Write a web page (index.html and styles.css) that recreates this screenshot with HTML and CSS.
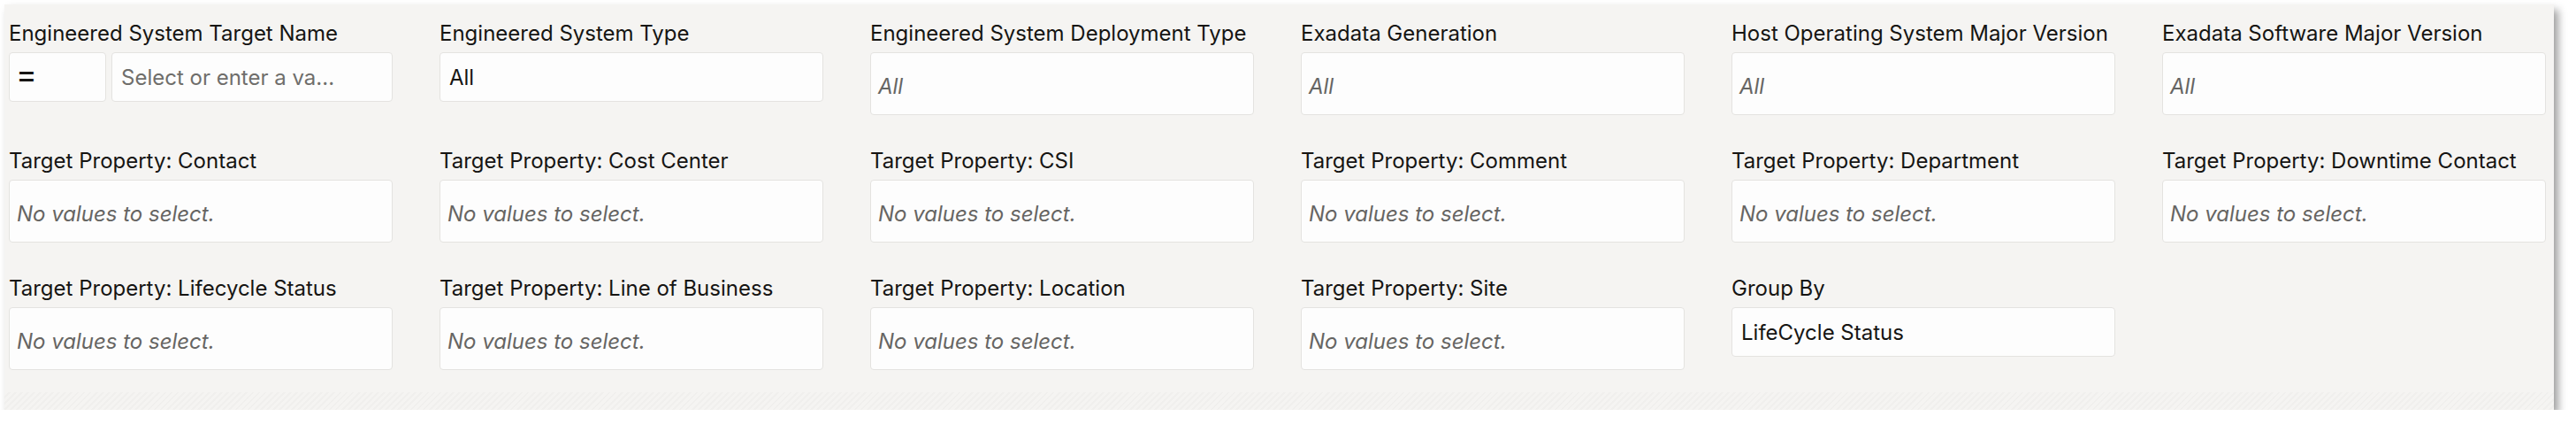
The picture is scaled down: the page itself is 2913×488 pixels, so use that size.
FILE: index.html
```html
<!DOCTYPE html>
<html lang="en">
<head>
<meta charset="utf-8">
<title>Filters</title>
<link rel="stylesheet" href="styles.css">
</head>
<body>
<div class="panel">
  <div class="grid">
    <div class="field">
      <div class="label">Engineered System Target Name</div>
      <div class="split">
        <div class="box short op">=</div>
        <div class="box short ph">Select or enter a va...</div>
      </div>
    </div>
    <div class="field">
      <div class="label">Engineered System Type</div>
      <div class="box short val">All</div>
    </div>
    <div class="field">
      <div class="label">Engineered System Deployment Type</div>
      <div class="box tall it">All</div>
    </div>
    <div class="field">
      <div class="label">Exadata Generation</div>
      <div class="box tall it">All</div>
    </div>
    <div class="field">
      <div class="label">Host Operating System Major Version</div>
      <div class="box tall it">All</div>
    </div>
    <div class="field">
      <div class="label">Exadata Software Major Version</div>
      <div class="box tall it">All</div>
    </div>

    <div class="field">
      <div class="label">Target Property: Contact</div>
      <div class="box tall it">No values to select.</div>
    </div>
    <div class="field">
      <div class="label">Target Property: Cost Center</div>
      <div class="box tall it">No values to select.</div>
    </div>
    <div class="field">
      <div class="label">Target Property: CSI</div>
      <div class="box tall it">No values to select.</div>
    </div>
    <div class="field">
      <div class="label">Target Property: Comment</div>
      <div class="box tall it">No values to select.</div>
    </div>
    <div class="field">
      <div class="label">Target Property: Department</div>
      <div class="box tall it">No values to select.</div>
    </div>
    <div class="field">
      <div class="label">Target Property: Downtime Contact</div>
      <div class="box tall it">No values to select.</div>
    </div>

    <div class="field">
      <div class="label">Target Property: Lifecycle Status</div>
      <div class="box tall it">No values to select.</div>
    </div>
    <div class="field">
      <div class="label">Target Property: Line of Business</div>
      <div class="box tall it">No values to select.</div>
    </div>
    <div class="field">
      <div class="label">Target Property: Location</div>
      <div class="box tall it">No values to select.</div>
    </div>
    <div class="field">
      <div class="label">Target Property: Site</div>
      <div class="box tall it">No values to select.</div>
    </div>
    <div class="field">
      <div class="label">Group By</div>
      <div class="box short val">LifeCycle Status</div>
    </div>
  </div>
  <div class="stripe"></div>
</div>
</body>
</html>
```
FILE: styles.css
```css
html, body {
  margin: 0;
  padding: 0;
  background: #ffffff;
}
body {
  font-family: Inter, "Liberation Sans", Arial, sans-serif;
  font-size: 24px;
  color: #161513;
}
.panel {
  margin: 5px 0 0 5px;
  width: 2883px;
  height: 458px;
  background: #f5f4f2;
  box-shadow: 5px 6px 9px rgba(0, 0, 0, 0.38);
  display: flex;
  flex-direction: column;
}
.grid {
  display: grid;
  grid-template-columns: repeat(6, 434px);
  column-gap: 53px;
  row-gap: 37px;
  padding: 18px 0 0 5px;
  align-items: start;
}
.field {
  display: flex;
  flex-direction: column;
  gap: 6px;
}
.label {
  line-height: 30px;
  height: 30px;
  white-space: nowrap;
  color: #161513;
}
.split {
  display: flex;
  gap: 6px;
}
.box {
  box-sizing: border-box;
  background: #fdfdfd;
  border: 1px solid #e4e3e0;
  border-radius: 4px;
  display: flex;
  align-items: center;
  white-space: nowrap;
  overflow: hidden;
}
.short {
  height: 56px;
  padding: 0 10px;
}
.tall {
  height: 71px;
  padding: 6px 8px 0;
}
.op {
  width: 110px;
  flex: none;
  padding: 0 0 6px 7px;
  font-size: 36px;
  line-height: 1;
  color: #161513;
}
.ph {
  flex: 1;
  color: #6f6e6b;
}
.val {
  color: #161513;
}
.it {
  font-style: italic;
  color: #666563;
}
.stripe {
  margin-top: auto;
  height: 20px;
  background: repeating-linear-gradient(135deg, #f5f4f2 0 3px, #f0efed 3px 5px);
}
```
